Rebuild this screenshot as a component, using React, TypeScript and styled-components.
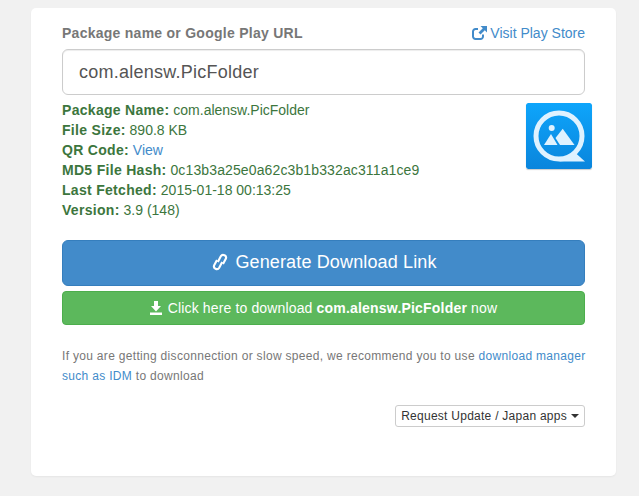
import styled, { createGlobalStyle } from "styled-components";

const GlobalStyle = createGlobalStyle`
    html, body {
        margin: 0;
        background-color: #f1f1f1;
    }
    * {
        box-sizing: border-box;
    }
`

const Page = styled.div`
    width: 639px;
    height: 496px;
    padding: 8px 23px 20px 31px;
    font-family: "Liberation Sans", Arial, sans-serif;
    font-size: 14px;
    line-height: 20px;
    color: #333;
    overflow: hidden;
`

const Card = styled.main`
    height: 468px;
    padding: 15px 31px 0;
    background-color: #fff;
    border-radius: 5px;
    box-shadow: 0 1px 2px rgba(0, 0, 0, 0.05);
`

const LabelRow = styled.div`
    display: flex;
    justify-content: space-between;
    align-items: center;
    height: 20px;
`

const Label = styled.label`
    font-weight: 700;
    color: #777;
    letter-spacing: 0.26px;
`

const Link = styled.a`
    color: #428bca;
    text-decoration: none;
`

const StoreLink = styled(Link)`
    display: flex;
    align-items: center;
    gap: 3px;
`

const PackageInput = styled.input`
    display: block;
    width: 100%;
    height: 46px;
    margin-top: 6px;
    padding: 0 16px;
    font-family: inherit;
    font-size: 18px;
    letter-spacing: 0.25px;
    color: #555;
    background-color: #fff;
    border: 1px solid #ccc;
    border-radius: 6px;
    box-shadow: inset 0 1px 1px rgba(0, 0, 0, 0.075);
`

const InfoRow = styled.section`
    display: flex;
    justify-content: space-between;
    align-items: flex-start;
    height: 130px;
    margin-top: 5px;
    margin-right: -7px;
`

const InfoList = styled.div`
    color: #3c763d;

    b {
        letter-spacing: 0.3px;
    }
`

const InfoLine = styled.div`
    height: 20px;
`

const Hash = styled.span`
    letter-spacing: 0.125px;
`

const AppIcon = styled.svg`
    display: block;
    width: 66px;
    height: 66px;
    margin-top: 3px;
    border-radius: 2px;
    box-shadow: 0 1px 1px rgba(0, 0, 0, 0.2);
`

const BigButton = styled.button<{ $tone: "blue" | "green"; $large?: boolean }>`
    display: flex;
    justify-content: center;
    align-items: center;
    width: 100%;
    height: ${(p) => (p.$large ? "46px" : "34px")};
    margin-top: ${(p) => (p.$large ? "10px" : "5px")};
    gap: ${(p) => (p.$large ? "7px" : "6px")};
    padding: ${(p) => (p.$large ? "0 0 2px 2px" : "0")};
    font-family: inherit;
    font-size: ${(p) => (p.$large ? "18px" : "14px")};
    letter-spacing: 0.14px;
    color: #fff;
    background-color: ${(p) => (p.$tone === "blue" ? "#428bca" : "#5cb85c")};
    border: 1px solid ${(p) => (p.$tone === "blue" ? "#357ebd" : "#4cae4c")};
    border-radius: ${(p) => (p.$large ? "6px" : "4px")};

    b {
        letter-spacing: 0.2px;
    }
`

const Notice = styled.p`
    margin: 21px -4px 0 0;
    font-size: 12px;
    line-height: 20px;
    letter-spacing: 0.31px;
    color: #777;
`

const DropdownRow = styled.div`
    display: flex;
    justify-content: flex-end;
    margin-top: 19px;
`

const DropdownButton = styled.button`
    display: flex;
    align-items: center;
    gap: 4px;
    height: 22px;
    padding: 0 5px;
    font-family: inherit;
    font-size: 12px;
    letter-spacing: 0.26px;
    color: #333;
    background-color: #fff;
    border: 1px solid #ccc;
    border-radius: 3px;
`

const Caret = styled.span`
    width: 0;
    height: 0;
    border-top: 4px solid #333;
    border-left: 4px solid transparent;
    border-right: 4px solid transparent;
`

function ExternalIcon() {
    return (
        <svg width="15" height="14" viewBox="0 0 15 14" aria-hidden="true">
            <path d="M11 8.500v2A2.500 2.500 0 0 1 8.500 13h-5A2.500 2.500 0 0 1 1 10.500v-5A2.500 2.500 0 0 1 3.500 3H6" fill="none" stroke="#428bca" strokeWidth="2" />
            <path d="M8.500 0H15v6.500l-2.200-2.200-4.300 4.300-2-2 4.300-4.300z" fill="#428bca" />
        </svg>
    );
}

function ChainIcon() {
    return (
        <svg width="16" height="18" viewBox="0 0 16 18" aria-hidden="true" fill="none" stroke="#fff" strokeWidth="2.1">
            <path d="M5.800 9L8.800 3.300a2.800 2.800 0 0 1 5 2.500L11 11" />
            <path d="M10.200 9L7.200 14.700a2.800 2.800 0 0 1-5-2.500L5 7" />
        </svg>
    );
}

function DownloadIcon() {
    return (
        <svg width="12" height="14" viewBox="0 0 12 14" aria-hidden="true" fill="#fff">
            <path d="M4 0h4v5h3l-5 5.500L1 5h3z" />
            <path d="M0 11.500h12V14H0z" />
        </svg>
    );
}

function PicFolderIcon() {
    return (
        <AppIcon viewBox="0 0 66 66" aria-label="QuickPic">
            <defs>
                <linearGradient id="tile" x1="0" y1="0" x2="0" y2="1">
                    <stop offset="0" stopColor="#0ea5fb" />
                    <stop offset="1" stopColor="#0a85dc" />
                </linearGradient>
            </defs>
            <rect width="66" height="66" rx="2" fill="url(#tile)" />
            <circle cx="33" cy="33" r="23" fill="none" stroke="#dff2ff" strokeWidth="5" />
            <path d="M33 58.500h26l-9.500-8.500z" fill="#dff2ff" />
            <circle cx="25.700" cy="25" r="3" fill="#dff2ff" />
            <path d="M18 42l7-11 6.500 11z" fill="#dff2ff" />
            <path d="M36.700 25.700L48.500 42H34l-4.500-7z" fill="#dff2ff" />
        </AppIcon>
    );
}

export default function App() {
    return (
        <Page>
            <GlobalStyle />
            <Card>
                <LabelRow>
                    <Label htmlFor="package">Package name or Google Play URL</Label>
                    <StoreLink href="#"><ExternalIcon />Visit Play Store</StoreLink>
                </LabelRow>
                <PackageInput id="package" defaultValue="com.alensw.PicFolder" />
                <InfoRow>
                    <InfoList>
                        <InfoLine><b>Package Name:</b> com.alensw.PicFolder</InfoLine>
                        <InfoLine><b>File Size:</b> 890.8 KB</InfoLine>
                        <InfoLine><b>QR Code:</b> <Link href="#">View</Link></InfoLine>
                        <InfoLine><b>MD5 File Hash:</b> <Hash>0c13b3a25e0a62c3b1b332ac311a1ce9</Hash></InfoLine>
                        <InfoLine><b>Last Fetched:</b> 2015-01-18 00:13:25</InfoLine>
                        <InfoLine><b>Version:</b> 3.9 (148)</InfoLine>
                    </InfoList>
                    <PicFolderIcon />
                </InfoRow>
                <BigButton $tone="blue" $large><ChainIcon />Generate Download Link</BigButton>
                <BigButton $tone="green"><DownloadIcon /><span>Click here to download <b>com.alensw.PicFolder</b> now</span></BigButton>
                <Notice>
                    If you are getting disconnection or slow speed, we recommend you to use <Link href="#">download manager such as IDM</Link> to download
                </Notice>
                <DropdownRow>
                    <DropdownButton>Request Update / Japan apps <Caret /></DropdownButton>
                </DropdownRow>
            </Card>
        </Page>
    );
}
